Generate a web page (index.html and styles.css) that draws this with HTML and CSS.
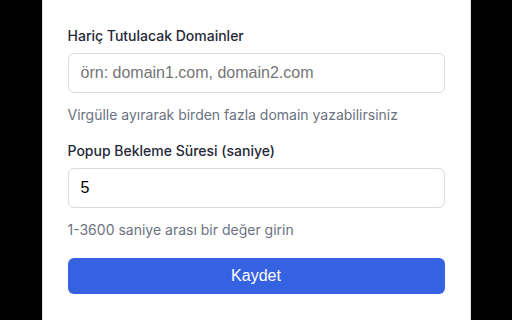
FILE: index.html
```html
<!DOCTYPE html>
<html lang="tr">
<head>
<meta charset="utf-8">
<title>Ayarlar</title>
<link rel="stylesheet" href="styles.css">
</head>
<body>
<main class="panel">
  <div class="group">
    <label class="label" for="domains">Hariç Tutulacak Domainler</label>
    <input class="input" id="domains" type="text" placeholder="örn: domain1.com, domain2.com">
    <p class="hint">Virgülle ayırarak birden fazla domain yazabilirsiniz</p>
  </div>
  <div class="group">
    <label class="label" for="delay">Popup Bekleme Süresi (saniye)</label>
    <input class="input" id="delay" type="number" value="5">
    <p class="hint">1-3600 saniye arası bir değer girin</p>
  </div>
  <button class="button" type="button">Kaydet</button>
</main>
</body>
</html>
```
FILE: styles.css
```css
html, body {
  margin: 0;
  height: 320px;
  overflow: hidden;
}
body {
  background: #000;
  display: flex;
  justify-content: center;
}
.panel {
  width: 429px;
  box-sizing: border-box;
  padding: 26px 25px 0;
  background: #fff;
  border-left: 1px solid #e2e2e2;
  border-right: 1px solid #e2e2e2;
  min-height: 320px;
}
.label {
  display: block;
  font-family: Inter, "Noto Sans", sans-serif;
  font-weight: 500;
  font-size: 14px;
  line-height: 20px;
  color: #1f2937;
  margin-bottom: 7px;
}
.input {
  display: block;
  width: 100%;
  box-sizing: border-box;
  height: 40px;
  margin: 0;
  border: 1px solid #d9dbe0;
  border-radius: 6px;
  padding: 0 12px;
  font-family: "Liberation Sans", Arial, sans-serif;
  font-size: 16px;
  color: #000;
  background: #fff;
  outline: none;
  -moz-appearance: textfield;
}
.input::-webkit-outer-spin-button,
.input::-webkit-inner-spin-button {
  -webkit-appearance: none;
  margin: 0;
}
.input::placeholder {
  color: #757575;
  opacity: 1;
}
.hint {
  margin: 12px 0 0;
  font-family: Inter, "Noto Sans", sans-serif;
  font-size: 14px;
  line-height: 20px;
  color: #6b7280;
}
.group + .group {
  margin-top: 16px;
}
.button {
  display: block;
  width: 100%;
  height: 36px;
  margin-top: 18px;
  border: none;
  border-radius: 6px;
  background: #3562e0;
  color: #fff;
  font-family: "Liberation Sans", Arial, sans-serif;
  font-size: 16px;
  cursor: pointer;
}
```
